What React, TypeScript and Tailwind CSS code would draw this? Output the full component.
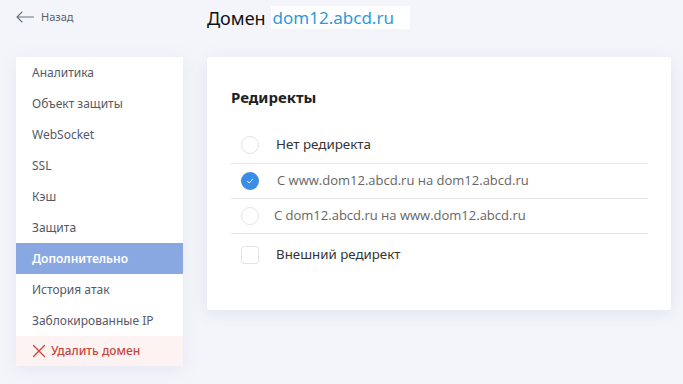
import React from "react";

const items = [
  "Аналитика",
  "Объект защиты",
  "WebSocket",
  "SSL",
  "Кэш",
  "Защита",
  "Дополнительно",
  "История атак",
  "Заблокированные IP",
];

function Radio({ checked }: { checked?: boolean }) {
  if (checked) {
    return (
      <span className="flex h-[18px] w-[18px] items-center justify-center rounded-full bg-[#3a8de6]">
        <svg width="10" height="10" viewBox="0 0 10 10" fill="none">
          <path d="M2.5 5.2 L4.3 7 L7.6 3.2" stroke="white" strokeWidth="1" strokeLinecap="round" strokeLinejoin="round" />
        </svg>
      </span>
    );
  }
  return <span className="block h-[18px] w-[18px] rounded-full border border-[#e2e4ea] bg-white" />;
}

export default function App() {
  return (
    <div
      className="min-h-[384px] w-[683px] bg-[#f4f5fa] text-[#333]"
      style={{ fontFamily: '"Noto Sans", "Open Sans", sans-serif' }}
    >
      <div className="flex h-[57px]">
        <div className="flex w-[207px] items-start gap-[7px] pl-[16px] pt-[10px]">
          <svg width="18" height="12" viewBox="0 0 18 12" fill="none" className="mt-[1px]">
            <path d="M17.5 6 H1 M6 1 L1 6 L6 11" stroke="#6b7280" strokeWidth="1.1" strokeLinecap="round" strokeLinejoin="round" />
          </svg>
          <span className="text-[11px] leading-[14px] text-[#5a5f6b]">Назад</span>
        </div>
        <div className="flex items-start pt-[6px]">
          <span className="text-[18px] leading-[24px] text-[#111]">Домен</span>
          <span className="ml-[5px] h-[23px] bg-white pl-[2px] pr-[16px] text-[17px] leading-[23px] text-[#2d9ad8]">
            dom12.abcd.ru
          </span>
        </div>
      </div>
      <div className="flex items-start">
        <div className="ml-[16px] w-[167px] bg-white shadow-[0_4px_16px_rgba(140,155,200,0.15)]">
          {items.map((it) => (
            <div
              key={it}
              className={
                it === "Дополнительно"
                  ? "flex h-[31px] items-center bg-[#89a8e2] pl-[16px] text-[12px] font-semibold text-white"
                  : "flex h-[31px] items-center pl-[16px] text-[12px] text-[#555a66]"
              }
            >
              {it}
            </div>
          ))}
          <div className="flex h-[30px] items-center gap-[5px] bg-[#fdf3f2] pl-[16px] text-[12px] font-medium text-[#c5483c]">
            <svg width="14" height="14" viewBox="0 0 14 14" fill="none">
              <path d="M1.5 1.5 L12.5 12.5 M12.5 1.5 L1.5 12.5" stroke="#d0443a" strokeWidth="1.4" strokeLinecap="round" />
            </svg>
            Удалить домен
          </div>
        </div>
        <div className="ml-[24px] h-[253px] w-[464px] rounded-[3px] bg-white pl-[24px] pr-[23px] pt-[28px] shadow-[0_4px_16px_rgba(140,155,200,0.18)]">
          <div className="text-[15px] font-bold leading-[24px] text-[#222]">Редиректы</div>
          <div className="mt-[17px]">
            <div className="flex h-[38px] items-center border-b border-[#e3e5ea] pl-[10px]">
              <Radio />
              <span className="ml-[17px] text-[13.4px] text-[#333]">Нет редиректа</span>
            </div>
            <div className="flex h-[35px] items-center border-b border-[#e3e5ea] pl-[10px]">
              <Radio checked />
              <span className="ml-[18px] text-[13px] text-[#666]" style={{ fontFamily: '"Open Sans", sans-serif' }}>
                С www.dom12.abcd.ru на dom12.abcd.ru
              </span>
            </div>
            <div className="flex h-[35px] items-center border-b border-[#e3e5ea] pl-[10px]">
              <Radio />
              <span className="ml-[15px] text-[13px] text-[#666]" style={{ fontFamily: '"Open Sans", sans-serif' }}>
                С dom12.abcd.ru на www.dom12.abcd.ru
              </span>
            </div>
            <div className="flex h-[42px] items-center pl-[10px]">
              <span className="block h-[18px] w-[18px] rounded-[3px] border border-[#e2e4ea] bg-white" />
              <span className="ml-[17px] text-[13.3px] text-[#333]">Внешний редирект</span>
            </div>
          </div>
        </div>
      </div>
    </div>
  );
}
